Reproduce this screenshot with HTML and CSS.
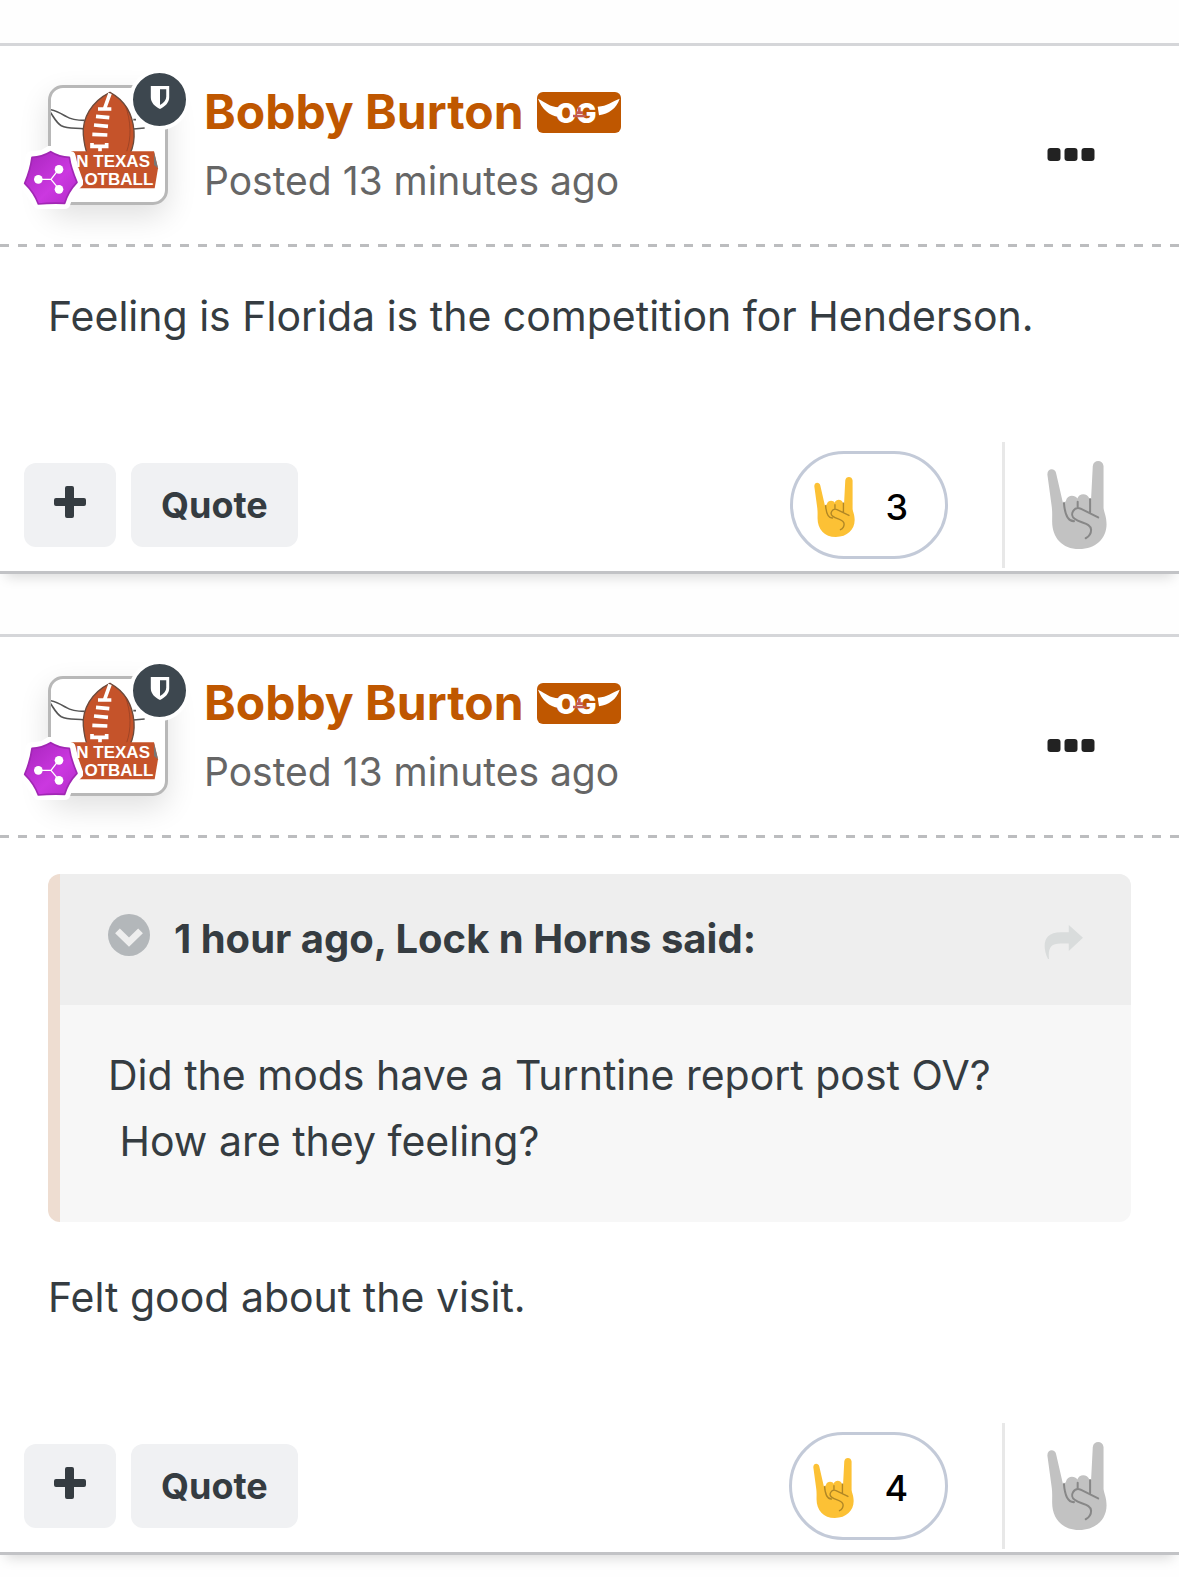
FILE: index.html
```html
<!DOCTYPE html>
<html lang="en">
<head>
    <meta charset="UTF-8">
    <meta name="viewport" content="width=device-width, initial-scale=1.0">
    <title>Topic</title>
    <link rel="stylesheet" href="styles.css">
</head>
<body>
    <!-- shared icons -->
    <svg class="sprite" aria-hidden="true">
        <symbol id="horns" viewBox="0 0 178 262">
            <path fill="currentColor" d="M1 42C-1 20 24 20 27 37L47 124C51 124 54 122 56 118C60 100 83 100 90 112C96 94 120 96 126 112L131 112L136 15C138-5 166-5 168 15V140C170 155 177 165 177 188C177 230 145 262 95 262C45 262 15 228 15 180C15 160 16 150 13 130Z"/>
            <path class="horns-line" d="M50 124C52 150 60 180 80 179M91 121V138M128 113V154M152 168L100 142C80 134 65 160 82 172C100 186 130 184 131 205C131 217 125 225 115 230"/>
        </symbol>
        <symbol id="football" viewBox="9 9 342 342">
            <path fill="#fff" stroke="#555" stroke-width="5" d="M110 106C84 106 70 104 54 94C36 84 20 74 0 73C14 88 22 112 40 122C60 132 84 128 110 132M256 104H264M256 132L290 129"/>
            <path fill="#c5532a" stroke="#6b4a3c" stroke-width="4" d="M186 22C130 50 102 100 106 150C108 170 110 190 118 206H246C254 190 260 166 258 138C254 88 234 48 186 22Z"/>
            <path fill="none" stroke="#8d3d22" stroke-width="2" d="M232 62C250 110 250 160 236 200"/>
            <path fill="none" stroke="#fff" stroke-width="11" d="M186 25L170 70M150 72H190M144 94L184 98M138 120L180 124M133 148L178 150M132 174V184H176V174M156 184V200"/>
            <path fill="#c5532a" d="M40 199H318L330 250L320 310H40Z"/>
            <path fill="#777" d="M318 202L330 250L318 240Z"/>
        </symbol>
        <symbol id="shield" viewBox="0 0 60 70">
            <path fill="#fff" fill-rule="evenodd" d="M2 0H58V34C58 50 46 62 30 70C14 62 2 50 2 34ZM30 10V58C42 51 49 43 49 33V10Z"/>
        </symbol>
        <symbol id="rank" viewBox="0 0 192 192">
            <path fill="#fff" stroke="#fff" stroke-width="34" stroke-linejoin="round" d="M95 15L118 29L153 32L161 67L176 109L149 137L137 172H58L39 142L17 112L30 69L37 33L72 29Z"/>
            <path fill="url(#rankFill)" stroke="#a127b4" stroke-width="5" stroke-linejoin="round" d="M95 17Q121 33 151 34Q155 64 174 109Q147 137 137 172Q96 170 58 174Q45 139 17 112Q34 72 39 34Q68 33 95 17Z"/>
            <path fill="none" stroke="#fff" stroke-width="4" d="M58 100H96L119 70M96 100L119 128"/>
            <circle fill="#fff" cx="58" cy="100" r="13"/>
            <circle fill="#fff" cx="120" cy="70" r="13"/>
            <circle fill="#fff" cx="120" cy="130" r="13"/>
        </symbol>
        <symbol id="plus" viewBox="0 0 32 32">
            <path fill="currentColor" d="M13 0H18Q20 0 20 2V12H30Q32 12 32 14V18Q32 20 30 20H20V30Q20 32 18 32H13Q11 32 11 30V20H2Q0 20 0 18V14Q0 12 2 12H11V2Q11 0 13 0Z"/>
        </symbol>
        <symbol id="dots" viewBox="0 0 47 13">
            <rect width="13" height="13" rx="3"/>
            <rect x="17" width="13" height="13" rx="3"/>
            <rect x="34" width="13" height="13" rx="3"/>
        </symbol>
        <linearGradient id="rankFill" x1="0" y1="0" x2="1" y2="1">
            <stop offset="0.1" stop-color="#ad28c2"/>
            <stop offset="0.6" stop-color="#cb38e0"/>
            <stop offset="1" stop-color="#b32bc8"/>
        </linearGradient>
    </svg>

    <main class="feed">
        <article class="post">
            <header class="post-header">
                <a class="avatar" href="#" aria-label="Bobby Burton">
                    <svg class="avatar-img" viewBox="9 9 342 342">
                        <use href="#football" x="9" y="9" width="342" height="342"/>
                        <text class="logo-text" x="306" y="245">N TEXAS</text>
                        <text class="logo-text" x="316" y="299">OTBALL</text>
                    </svg>
                    <span class="mod-badge"><svg><use href="#shield"/></svg></span>
                    <svg class="rank-badge"><use href="#rank"/></svg>
                </a>
                <div class="post-meta">
                    <div class="author">
                        <a href="#">Bobby Burton</a>
                        <svg class="og-badge" viewBox="0 0 252 123">
                            <path fill="#fff" d="M3 20C28 32 36 44 66 46L64 74C38 72 14 50 3 20ZM248 20C222 30 212 42 182 44L186 70C216 64 238 50 248 20Z"/>
                            <text class="og-text" x="56" y="92">OG</text>
                            <path fill="#c45b53" d="M108 68H146V76H108ZM117 58H138V66H117ZM123 46H131V58H123Z"/>
                        </svg>
                    </div>
                    <a class="date" href="#">Posted 13 minutes ago</a>
                </div>
                <button class="more" type="button" aria-label="More options"><svg><use href="#dots"/></svg></button>
            </header>
            <div class="post-body">
                <p>Feeling is Florida is the competition for Henderson.</p>
            </div>
            <footer class="post-footer">
                <button class="btn btn-plus" type="button" aria-label="Multiquote"><svg><use href="#plus"/></svg></button>
                <button class="btn" type="button">Quote</button>
                <button class="reactions" type="button"><svg><use href="#horns"/></svg>3</button>
                <button class="react" type="button" aria-label="Hook 'em"><svg><use href="#horns"/></svg></button>
            </footer>
        </article>

        <article class="post">
            <header class="post-header">
                <a class="avatar" href="#" aria-label="Bobby Burton">
                    <svg class="avatar-img" viewBox="9 9 342 342">
                        <use href="#football" x="9" y="9" width="342" height="342"/>
                        <text class="logo-text" x="306" y="245">N TEXAS</text>
                        <text class="logo-text" x="316" y="299">OTBALL</text>
                    </svg>
                    <span class="mod-badge"><svg><use href="#shield"/></svg></span>
                    <svg class="rank-badge"><use href="#rank"/></svg>
                </a>
                <div class="post-meta">
                    <div class="author">
                        <a href="#">Bobby Burton</a>
                        <svg class="og-badge" viewBox="0 0 252 123">
                            <path fill="#fff" d="M3 20C28 32 36 44 66 46L64 74C38 72 14 50 3 20ZM248 20C222 30 212 42 182 44L186 70C216 64 238 50 248 20Z"/>
                            <text class="og-text" x="56" y="92">OG</text>
                            <path fill="#c45b53" d="M108 68H146V76H108ZM117 58H138V66H117ZM123 46H131V58H123Z"/>
                        </svg>
                    </div>
                    <a class="date" href="#">Posted 13 minutes ago</a>
                </div>
                <button class="more" type="button" aria-label="More options"><svg><use href="#dots"/></svg></button>
            </header>
            <div class="post-body">
                <blockquote class="quote">
                    <div class="quote-header">
                        <button class="quote-toggle" type="button" aria-label="Collapse quote">
                            <svg viewBox="0 0 124 124">
                                <circle cx="62" cy="62" r="62" fill="#b3b7ba"/>
                                <path d="M28 50L62 83L96 50" fill="none" stroke="#eee" stroke-width="20"/>
                            </svg>
                        </button>
                        <span class="quote-cite">1 hour ago, Lock n Horns said:</span>
                        <a class="quote-link" href="#" aria-label="Go to post">
                            <svg viewBox="0 0 118 103"><path fill="#d9dcdc" d="M12 103C-8 60 0 22 50 22H75V0L118 39L75 79V56H50C20 56 12 70 15 103Z"/></svg>
                        </a>
                    </div>
                    <div class="quote-body">
                        <p>Did the mods have a Turntine report post OV? &nbsp;How are they feeling?</p>
                    </div>
                </blockquote>
                <p>Felt good about the visit.</p>
            </div>
            <footer class="post-footer">
                <button class="btn btn-plus" type="button" aria-label="Multiquote"><svg><use href="#plus"/></svg></button>
                <button class="btn" type="button">Quote</button>
                <button class="reactions" type="button"><svg><use href="#horns"/></svg>4</button>
                <button class="react" type="button" aria-label="Hook 'em"><svg><use href="#horns"/></svg></button>
            </footer>
        </article>
    </main>
</body>
</html>
```
FILE: styles.css
```css
* {
    box-sizing: border-box;
}
body {
    margin: 0;
    background: #fefefe;
    color: #353c41;
    font-family: Inter, 'Liberation Sans', sans-serif;
    font-size: 41px;
    line-height: 66px;
}
a {
    color: inherit;
    text-decoration: none;
}
p {
    margin: 0;
}
svg {
    display: block;
}
button {
    font: inherit;
    border: 0;
    padding: 0;
    background: none;
    cursor: pointer;
}
.sprite {
    position: absolute;
    width: 0;
    height: 0;
}
.feed {
    display: flex;
    flex-direction: column;
    gap: 60px;
    padding: 43px 0 22px;
}
.post {
    background: #fff;
    border-top: 3px solid #d5d6d9;
    border-bottom: 3px solid #c2c3c6;
    box-shadow: 0 9px 12px -6px rgba(0, 0, 0, 0.15);
}

/* header */
.post-header {
    display: flex;
    align-items: center;
    gap: 36px;
    padding: 30px 84px 33px 48px;
    background: repeating-linear-gradient(90deg, #bcbdbf 0 9px, transparent 9px 18px) bottom / 100% 3px no-repeat;
}
.avatar {
    position: relative;
    width: 120px;
    height: 120px;
    flex-shrink: 0;
    border: 3px solid #b8b8b8;
    border-radius: 15px;
    background: #fff;
    box-shadow: 0 12px 30px rgba(0, 0, 0, 0.12);
}
.avatar-img {
    width: 100%;
    height: 100%;
}
.logo-text {
    fill: #fff;
    font: bold 51px 'Liberation Sans', sans-serif;
    text-anchor: end;
}
.mod-badge {
    position: absolute;
    top: -19px;
    right: -25px;
    width: 61px;
    height: 61px;
    display: flex;
    justify-content: center;
    padding-top: 13px;
    border: 4px solid #fff;
    border-radius: 50%;
    background: #3d474f;
}
.mod-badge svg {
    width: 20px;
    height: 23px;
}
.rank-badge {
    position: absolute;
    left: -32px;
    bottom: -8px;
    width: 64px;
    height: 64px;
}
.post-meta {
    flex: 1;
    min-width: 0;
}
.author {
    display: flex;
    align-items: center;
    gap: 13px;
    color: #bf5700;
    font-size: 48px;
    font-weight: 700;
    line-height: 72px;
}
.og-badge {
    width: 84px;
    height: 41px;
    border-radius: 6px;
    background: #bf5700;
}
.og-text {
    fill: #fff;
    font: 900 80px Inter, sans-serif;
}
.date {
    display: block;
    color: #666;
    font-size: 39px;
}
.more {
    padding-top: 18px;
}
.more svg {
    width: 48px;
    height: 13px;
    fill: #222;
}

/* content */
.post-body {
    padding: 36px 48px 93px;
}
.quote {
    margin: 0 0 42px;
    border-left: 12px solid #eeddd1;
    border-radius: 12px;
    background: #f7f7f7;
    overflow: hidden;
}
.quote-header {
    display: flex;
    align-items: center;
    gap: 24px;
    padding: 32px 48px 33px;
    background: #eee;
    font-size: 40px;
    font-weight: 700;
}
.quote-toggle {
    padding-bottom: 8px;
}
.quote-toggle svg {
    width: 42px;
    height: 42px;
}
.quote-cite {
    flex: 1;
}
.quote-link {
    padding-top: 6px;
}
.quote-link svg {
    width: 39px;
    height: 34px;
}
.quote-body {
    padding: 37px 48px 48px;
}

/* footer */
.post-footer {
    display: flex;
    align-items: center;
    gap: 15px;
    padding: 0 0 3px 24px;
}
.btn {
    height: 84px;
    padding: 0 30px;
    border-radius: 12px;
    background: #f0f1f3;
    color: #353c41;
    font-size: 36px;
    font-weight: 700;
}
.btn-plus {
    padding-bottom: 6px;
}
.btn-plus svg {
    width: 32px;
    height: 32px;
}
.reactions {
    display: flex;
    align-items: center;
    gap: 30px;
    height: 108px;
    margin-left: auto;
    padding: 3px 37px 0 21px;
    border: 3px solid #c3cad8;
    border-radius: 54px;
    color: #000;
    font-size: 36px;
    font-weight: 500;
}
.reactions svg {
    width: 41px;
    height: 60px;
    color: #fcc135;
}
.react {
    display: flex;
    align-items: center;
    height: 126px;
    margin-left: 39px;
    padding: 0 72px 0 42px;
    border-left: 3px solid #e8e8e8;
}
.react svg {
    width: 60px;
    height: 88px;
    color: #c2c2c2;
}
.horns-line {
    fill: none;
    stroke: #000;
    stroke-opacity: 0.3;
    stroke-width: 6px;
    stroke-linecap: round;
}
```
